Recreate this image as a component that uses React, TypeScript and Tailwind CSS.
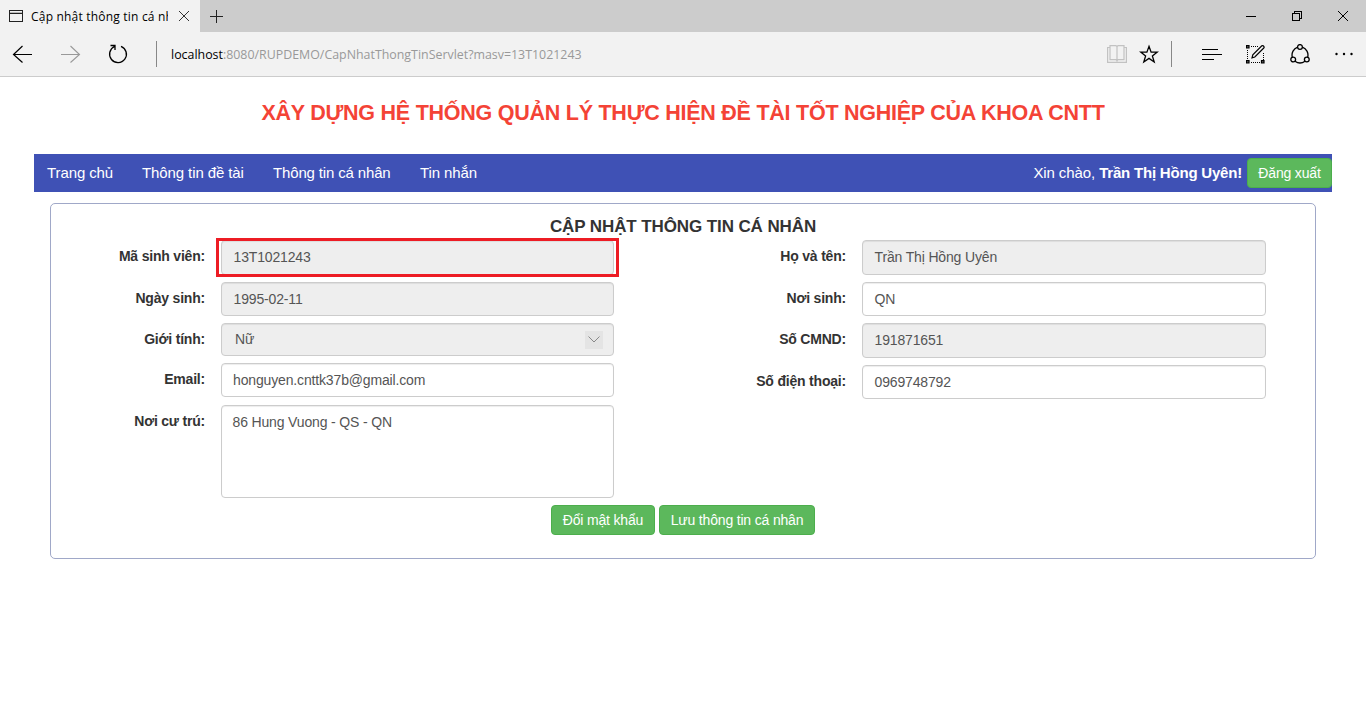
import type { ReactNode } from "react";

function Field({ label, value, className, tint, valueClass, children }: {
  label: string;
  value: string;
  className: string;
  tint?: boolean;
  valueClass?: string;
  children?: ReactNode;
}) {
  return (
    <div className={`flex items-start ${className}`}>
      <div className="flex-1 pt-[6px] pr-4 text-right text-[14px] leading-5 font-bold tracking-[-0.2px] whitespace-nowrap text-[#333]">{label}</div>
      <div
        className={`relative flex h-full w-(--field) shrink-0 items-start justify-between rounded-[4px] border border-[#ccc] pt-[6px] pl-[11.5px] text-[14px] leading-5 tracking-[-0.15px] text-[#555] shadow-[inset_0_1px_1px_rgba(0,0,0,0.075)] ${tint ? "bg-[#eee]" : "bg-white"}`}
      >
        <span className={valueClass}>{value}</span>
        {children}
      </div>
    </div>
  );
}

function Button({ children, className }: { children: ReactNode; className: string }) {
  return (
    <button className={`flex h-[30px] items-center justify-center rounded-[4px] border border-[#4cae4c] bg-[#5cb85c] text-[14px] leading-5 tracking-[-0.17px] whitespace-nowrap text-white ${className}`}>
      {children}
    </button>
  );
}

function TabStrip() {
  return (
    <div className="flex h-8 bg-[#ccc]">
      <div className="flex w-[200px] items-center bg-[#f2f2f2] pl-[9px]">
        <svg width="14" height="12" viewBox="0 0 14 12" fill="none" stroke="#222" shapeRendering="crispEdges">
          <path d="M.5 .5h13v11H.5zM1 3.5h12" />
          <path d="M1 2h12" stroke="#bbb" />
        </svg>
        <div className="mt-px ml-2 w-[137px] overflow-hidden font-['Open_Sans',sans-serif] text-[12px] leading-5 tracking-[0.2px] whitespace-nowrap text-black">
          Cập nhật thông tin cá nhân
        </div>
        <svg className="ml-[11px]" width="10" height="10" viewBox="0 0 10 10" stroke="#333" strokeWidth="1">
          <path d="M0 0l10 10M10 0L0 10" />
        </svg>
      </div>
      <svg className="mt-[10px] ml-[10px]" width="13" height="13" viewBox="0 0 13 13" stroke="#222" shapeRendering="crispEdges">
        <path d="M6.5 0v13M0 6.5h13" />
      </svg>
      <div className="ml-auto flex items-center pr-[18px]">
        <svg width="10" height="10" viewBox="0 0 10 10" stroke="#000" shapeRendering="crispEdges"><path d="M0 5.5h10" /></svg>
        <svg className="ml-9" width="10" height="10" viewBox="0 0 10 10" fill="none" stroke="#000" shapeRendering="crispEdges">
          <path d="M.5 2.5h7v7h-7zM2.5 2.5v-2h7v7h-2" />
        </svg>
        <svg className="ml-9" width="10" height="10" viewBox="0 0 10 10" stroke="#000"><path d="M0 0l10 10M10 0L0 10" /></svg>
      </div>
    </div>
  );
}

function Toolbar() {
  return (
    <div className="flex h-[45px] items-center border-b border-[#ccc] bg-[#f2f2f2] pl-3">
      <svg width="20" height="18" viewBox="0 0 20 18" fill="none" stroke="#000" strokeWidth="1.200">
        <path d="M20 9.500H1.500M10.500 1L1.500 9.500l9 8" />
      </svg>
      <svg className="ml-[29px]" width="20" height="18" viewBox="0 0 20 18" fill="none" stroke="#999" strokeWidth="1.100">
        <path d="M0 9.500h18.500M9.500 1L18.500 9.500l-9 8" />
      </svg>
      <svg className="ml-[27px]" width="20" height="20" viewBox="0 0 20 20" fill="none" stroke="#000" strokeWidth="1.300">
        <path d="M13 2.300A8.400 8.400 0 1 1 6.500 2.500M2.500 1.500h4.500v4.500" />
      </svg>
      <div className="ml-7 h-[26px] w-px bg-[#888]" />
      <div className="mt-[2px] ml-[14px] font-['Open_Sans',sans-serif] text-[12.4px] leading-5 whitespace-nowrap text-[#999]">
        <span className="text-black">localhost</span>:8080/RUPDEMO/CapNhatThongTinServlet?masv=13T1021243
      </div>
      <div className="ml-auto flex items-center pr-[13px]">
        <svg width="20" height="18" viewBox="0 0 20 18" fill="none" stroke="#c2c2c2" strokeWidth="1.200">
          <path d="M3 2.500H.6v14.800h18.800V2.500H17M3 .7h6l1 .8 1-.8h6v14h-6l-1 .8-1-.8H3zM10 1.500v15" />
        </svg>
        <svg className="ml-3" width="20" height="20" viewBox="0 0 20 20" fill="none" stroke="#000" strokeWidth="1.300">
          <path d="M10 2.300l2.100 5.800h6.200l-4.900 3.800 1.800 6.100-5.200-3.600-5.200 3.600 1.800-6.100-4.900-3.800h6.200z" />
        </svg>
        <div className="ml-3 h-[26px] w-px bg-[#888]" />
        <svg className="ml-[30px]" width="20" height="14" viewBox="0 0 20 14" stroke="#000" shapeRendering="crispEdges">
          <path d="M0 2.500h16M0 7.500h20M0 12.500h12" />
        </svg>
        <svg className="ml-6" width="19" height="19" viewBox="0 0 19 19" fill="none" stroke="#000">
          <path d="M5 1.500h8M1.500 5v10M5 17.500h10M17.500 8v7" strokeDasharray="1 1" />
          <path d="M.5.5h2.500v2.500H.5zM.5 15.500h2.500v2.500H.5zM15.500 15.500h2.500v2.500h-2.500z" fill="#555" strokeWidth="1.200" />
          <path d="M6 12.800l.8-3L15.800.8q1.300-.5 2 .5t0 1.700l-9 9z" strokeWidth="1.200" />
        </svg>
        <svg className="ml-[25px]" width="20" height="20" viewBox="0 0 20 20" fill="none" stroke="#000" strokeWidth="1.300">
          <circle cx="10" cy="3" r="2.400" />
          <circle cx="3.200" cy="15.500" r="2.400" />
          <circle cx="16.800" cy="15.500" r="2.400" />
          <path d="M7.600 3.200A8.400 8.400 0 0 0 2.300 13.200M12.400 3.200A8.400 8.400 0 0 1 17.700 13.200M5 17.200A8.600 8.600 0 0 0 15 17.200" />
        </svg>
        <svg className="ml-[25px]" width="18" height="4" viewBox="0 0 18 4"><g fill="#000"><circle cx="1.500" cy="2" r="1.200" /><circle cx="9" cy="2" r="1.200" /><circle cx="16.500" cy="2" r="1.200" /></g></svg>
      </div>
    </div>
  );
}

export default function App() {
  return (
    <div className="h-[728px] w-[1366px] overflow-hidden bg-white font-['Liberation_Sans',Arial,sans-serif]">
      <TabStrip />
      <Toolbar />
      <h1 className="mt-[20px] h-8 text-center text-[21.5px] leading-8 font-bold tracking-[-0.25px] whitespace-nowrap text-[#f44336]">
        XÂY DỰNG HỆ THỐNG QUẢN LÝ THỰC HIỆN ĐỀ TÀI TỐT NGHIỆP CỦA KHOA CNTT
      </h1>
      <nav className="mx-[34px] mt-[25px] flex h-[38px] items-center bg-[#3f51b5] pl-[13px] text-[15px] tracking-[-0.1px] whitespace-nowrap text-white">
        <span className="w-[95px]">Trang chủ</span>
        <span className="w-[131px]">Thông tin đề tài</span>
        <span className="w-[147px] tracking-[-0.15px]">Thông tin cá nhân</span>
        <span>Tin nhắn</span>
        <span className="mr-[5px] ml-auto">Xin chào, <b className="tracking-[-0.2px]">Trần Thị Hồng Uyên!</b></span>
        <Button className="w-[85px]">Đăng xuất</Button>
      </nav>
      <main className="mx-[50px] mt-[11px] flex h-[356px] flex-col rounded-[5px] border border-[#a0a8c8]">
        <h2 className="mt-[12px] h-6 shrink-0 text-center text-[17px] leading-[22px] font-bold tracking-[-0.1px] text-[#333]">CẬP NHẬT THÔNG TIN CÁ NHÂN</h2>
        <div className="flex h-[258px] shrink-0">
          <div className="w-[563px] [--field:393px]">
            <Field className="h-[35px]" label="Mã sinh viên:" value="13T1021243" tint>
              <div className="absolute -top-[3px] -right-[6px] -bottom-[3px] -left-[6px] border-[3px] border-[#ed1c24]" />
            </Field>
            <Field className="mt-[7px] h-[34px]" label="Ngày sinh:" value="1995-02-11" tint />
            <Field className="mt-[7px] h-[33px]" label="Giới tính:" value="Nữ" valueClass="pl-[1.5px] -mt-px" tint>
              <div className="mt-[1px] mr-[10px] flex h-[18px] w-[18px] items-center justify-center bg-[#e4e4e4]">
                <svg className="-mt-px mr-px" width="12" height="7" viewBox="0 0 12 7" fill="none" stroke="#888"><path d="M.5.5L6 6l5.500-5.500" /></svg>
              </div>
            </Field>
            <Field className="mt-[7px] h-[34px]" label="Email:" value="honguyen.cnttk37b@gmail.com" valueClass="-ml-[0.5px]" />
            <Field className="mt-[8px] h-[93px]" label="Nơi cư trú:" value="86 Hung Vuong - QS - QN" valueClass="-ml-px" />
          </div>
          <div className="w-[652px] [--field:404px]">
            <Field className="h-[35px]" label="Họ và tên:" value="Trần Thị Hồng Uyên" tint />
            <Field className="mt-[7px] h-[34px]" label="Nơi sinh:" value="QN" />
            <Field className="mt-[7px] h-[35px]" label="Số CMND:" value="191871651" tint />
            <Field className="mt-[7px] h-[34px]" label="Số điện thoại:" value="0969748792" />
          </div>
        </div>
        <div className="mt-[7px] flex justify-center gap-1">
          <Button className="w-[104px]">Đổi mật khẩu</Button>
          <Button className="w-[156px]">Lưu thông tin cá nhân</Button>
        </div>
      </main>
    </div>
  );
}
